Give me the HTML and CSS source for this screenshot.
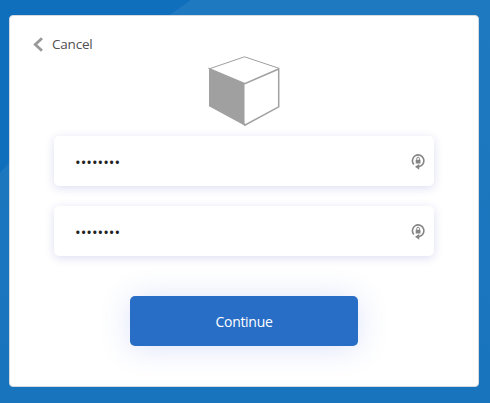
FILE: index.html
```html
<!DOCTYPE html>
<html lang="en">
<head>
<meta charset="utf-8">
<title>Set password</title>
<link rel="stylesheet" href="styles.css">
</head>
<body>
<svg class="backdrop" viewBox="0 0 490 403" aria-hidden="true">
  <defs>
    <linearGradient id="shade" x1="0" y1="0" x2="0" y2="1">
      <stop offset="0" stop-color="#1e79c0"/>
      <stop offset="1" stop-color="#1974be"/>
    </linearGradient>
  </defs>
  <path fill="url(#shade)" d="M0 173L9 163L171 14L191 0H490V403H0Z"/>
</svg>
<main class="card">
  <a class="cancel">
    <svg class="chevron" viewBox="0 0 10 15" aria-hidden="true"><path d="M9 1.3L2.3 7.6L9 13.7"/></svg>
    <span class="cancel-text">Cancel</span>
  </a>
  <svg class="cube" viewBox="0 0 72 72" aria-hidden="true">
    <path class="face" d="M1 13.5L36.5 28.5V70.5L1 51.3Z"/>
    <path class="edge thin" d="M1.7 51V13.7L36.5 1.8L71 13.3"/>
    <path class="edge" d="M1.7 14L36.8 28.7L70.7 14V51.8L36.8 70.2Z"/>
  </svg>
  <form class="form">
    <label class="field">
      <input type="password" value="password" aria-label="Password">
      <svg class="lock" viewBox="0 0 14 17" aria-hidden="true"><path class="ring" d="M2.8 11.6A5.7 5.9 0 1 1 8 13.6"/><path class="solid" d="M8.2 11V16.7L4 13.7ZM4.7 6.7H9.5V10.5H4.7Z"/><path class="shackle" d="M5.7 6.8V5.8A1.4 1.6 0 0 1 8.5 5.8V6.8"/></svg>
    </label>
    <label class="field">
      <input type="password" value="password" aria-label="Confirm password">
      <svg class="lock" viewBox="0 0 14 17" aria-hidden="true"><path class="ring" d="M2.8 11.6A5.7 5.9 0 1 1 8 13.6"/><path class="solid" d="M8.2 11V16.7L4 13.7ZM4.7 6.7H9.5V10.5H4.7Z"/><path class="shackle" d="M5.7 6.8V5.8A1.4 1.6 0 0 1 8.5 5.8V6.8"/></svg>
    </label>
    <button class="continue" type="button">Continue</button>
  </form>
</main>
</body>
</html>
```
FILE: styles.css
```css
* {
  box-sizing: border-box;
}

body {
  margin: 0;
  height: 403px;
  padding: 15px 11px 16px 9px;
  overflow: hidden;
  background: #0f6fbd;
  font-family: "Open Sans", "Noto Sans", sans-serif;
}

.backdrop {
  position: absolute;
  inset: 0;
  width: 490px;
  height: 403px;
  z-index: -1;
}

.card {
  display: flex;
  flex-direction: column;
  height: 372px;
  padding: 19px 44px 0;
  border: 1px solid #d5dae0;
  border-radius: 4px;
  background: #fff;
}

.cancel {
  display: flex;
  align-items: center;
  gap: 9px;
  height: 20px;
  margin: -1px 0 1px -21px;
  color: #505050;
  font-size: 13.5px;
  letter-spacing: -0.2px;
}

.cancel-text {
  padding-bottom: 1px;
}

.chevron {
  width: 10px;
  height: 15px;
  fill: none;
  stroke: #999;
  stroke-width: 2.8;
}

.cube {
  width: 72px;
  height: 72px;
  margin: 0 0 9px 154px;
}

.face {
  fill: #a0a0a0;
}

.edge {
  fill: none;
  stroke: #a0a0a0;
  stroke-width: 1.5;
}

.thin {
  stroke-width: 1;
}

.form {
  display: flex;
  flex-direction: column;
  gap: 20px;
  width: 380px;
}

.field {
  display: flex;
  align-items: center;
  height: 50px;
  padding: 0 9px 0 21px;
  border-radius: 5px;
  background: #fff;
  box-shadow: 0 2px 10px rgba(80, 80, 190, 0.2);
}

.field input {
  flex: 1;
  min-width: 0;
  height: 30px;
  padding: 2px 0 0;
  border: 0;
  outline: 0;
  background: transparent;
  color: #222;
  font: 15px "Open Sans", sans-serif;
}

.lock {
  width: 14px;
  height: 17px;
}

.ring,
.shackle {
  fill: none;
  stroke: #858585;
  stroke-width: 1.6;
}

.shackle {
  stroke-width: 1;
}

.solid {
  fill: #858585;
}

.continue {
  align-self: center;
  width: 228px;
  height: 50px;
  margin-top: 20px;
  padding: 0;
  border: 0;
  border-radius: 5px;
  background: #286ec6;
  color: #fff;
  font: 14px "Open Sans", sans-serif;
  letter-spacing: -0.3px;
  box-shadow: 0 2px 30px rgba(60, 100, 220, 0.18);
}
```
